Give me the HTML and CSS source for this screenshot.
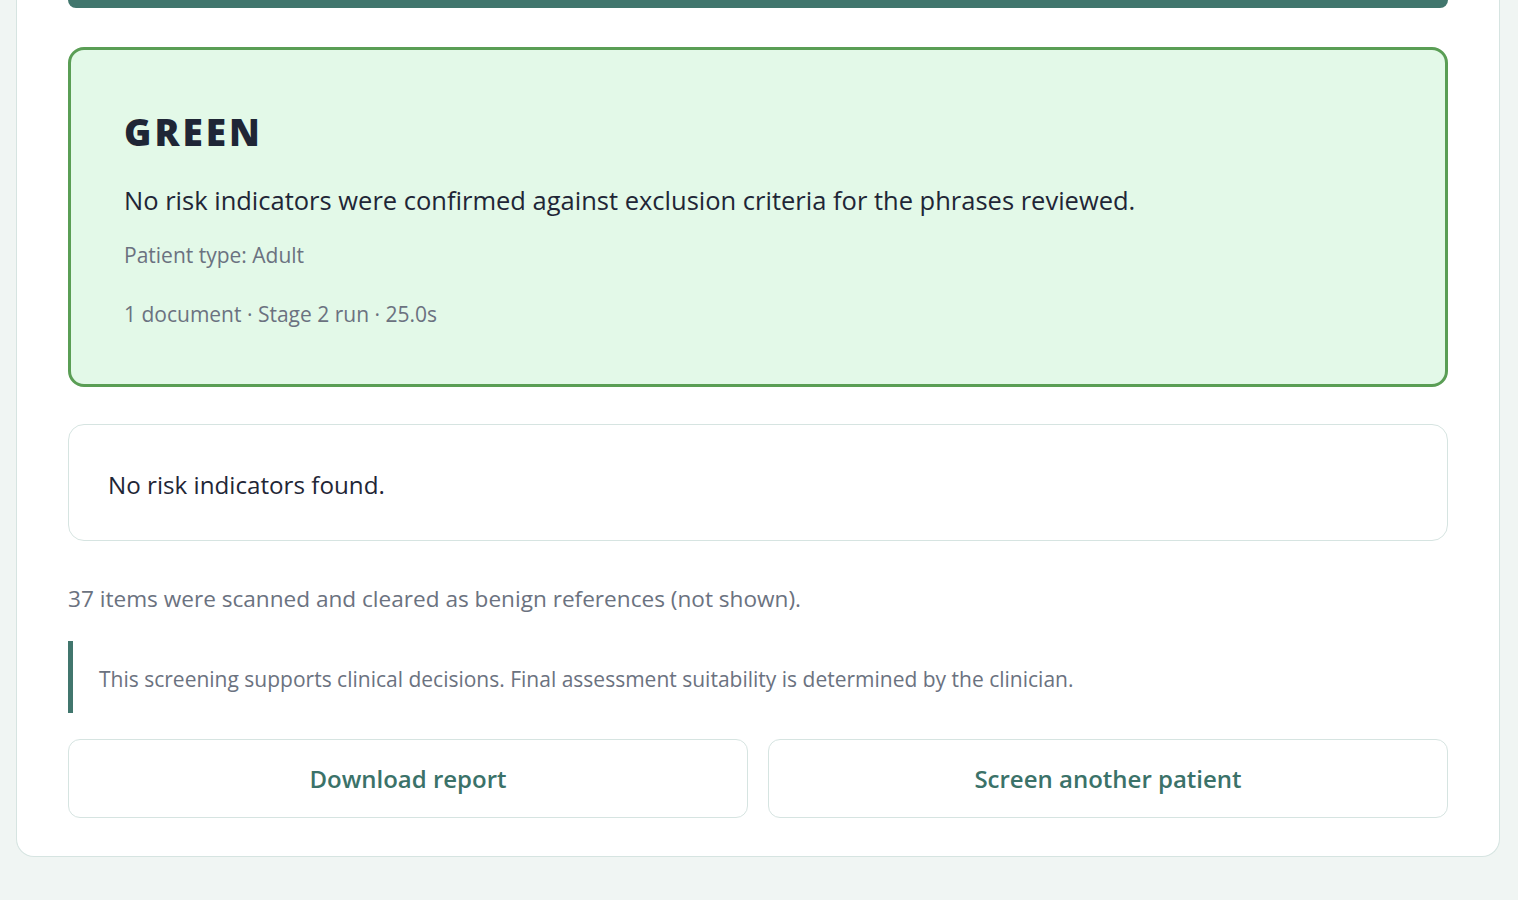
FILE: index.html
```html
<!DOCTYPE html>
<html lang="en">
<head>
<meta charset="utf-8">
<title>Screening result</title>
<link rel="stylesheet" href="styles.css">
</head>
<body>
<main class="page">
  <section class="card">
    <div class="bar"></div>
    <div class="result result-green">
      <h1 class="result-title">GREEN</h1>
      <p class="result-summary">No risk indicators were confirmed against exclusion criteria for the phrases reviewed.</p>
      <p class="result-meta">Patient type: Adult</p>
      <p class="result-meta">1 document · Stage 2 run · 25.0s</p>
    </div>
    <div class="findings">
      <p class="findings-empty">No risk indicators found.</p>
    </div>
    <p class="cleared">37 items were scanned and cleared as benign references (not shown).</p>
    <blockquote class="disclaimer">This screening supports clinical decisions. Final assessment suitability is determined by the clinician.</blockquote>
    <div class="actions">
      <button class="btn" type="button">Download report</button>
      <button class="btn" type="button">Screen another patient</button>
    </div>
  </section>
</main>
</body>
</html>
```

FILE: styles.css
```css
* { box-sizing: border-box; }
html, body { margin: 0; padding: 0; }
body {
  background: #f0f5f3;
  font-family: "Open Sans", "Noto Sans", "Liberation Sans", sans-serif;
  color: #1f2636;
}
.page {
  padding: 0 18px 43px 16px;
}
.card {
  background: #ffffff;
  border: 1px solid #d6e4e1;
  border-top: none;
  border-radius: 0 0 18px 18px;
  padding: 0 51px 38px;
  display: flex;
  flex-direction: column;
}
.bar {
  height: 8px;
  background: #41766d;
  border-radius: 0 0 10px 10px;
}
.result {
  margin-top: 39px;
  border: 3px solid #5a9e55;
  border-radius: 16px;
  background: #e3f9e8;
  padding: 54px 53px 55px;
}
.result-title {
  margin: 0;
  font-size: 37px;
  line-height: 56px;
  font-weight: 800;
  letter-spacing: 3px;
  color: #1f2636;
}
.result-summary {
  margin: 22px 0 0;
  font-size: 25.5px;
  line-height: 36px;
  color: #1f2636;
}
.result-meta {
  margin: 22px 0 0;
  font-size: 21px;
  line-height: 30px;
  color: #6b7280;
}
.result-meta + .result-meta { margin-top: 29px; }
.findings {
  margin-top: 37px;
  border: 1px solid #d6e4e1;
  border-radius: 16px;
  padding: 43px 39px 38px;
}
.findings-empty {
  margin: 0;
  font-size: 24.2px;
  line-height: 34px;
  color: #1f2636;
}
.cleared {
  margin: 42px 0 0;
  font-size: 22.6px;
  line-height: 32px;
  color: #6b7280;
}
.disclaimer {
  margin: 26px 0 0;
  border-left: 5px solid #41766d;
  padding: 23px 26px 19px;
  font-size: 21px;
  line-height: 30px;
  color: #6b7280;
}
.actions {
  margin-top: 26px;
  display: grid;
  grid-template-columns: 1fr 1fr;
  gap: 20px;
}
.btn {
  height: 79px;
  background: #ffffff;
  border: 1px solid #d6e4e1;
  border-radius: 12px;
  font-family: inherit;
  font-size: 24px;
  font-weight: 600;
  color: #3b7269;
}
```
